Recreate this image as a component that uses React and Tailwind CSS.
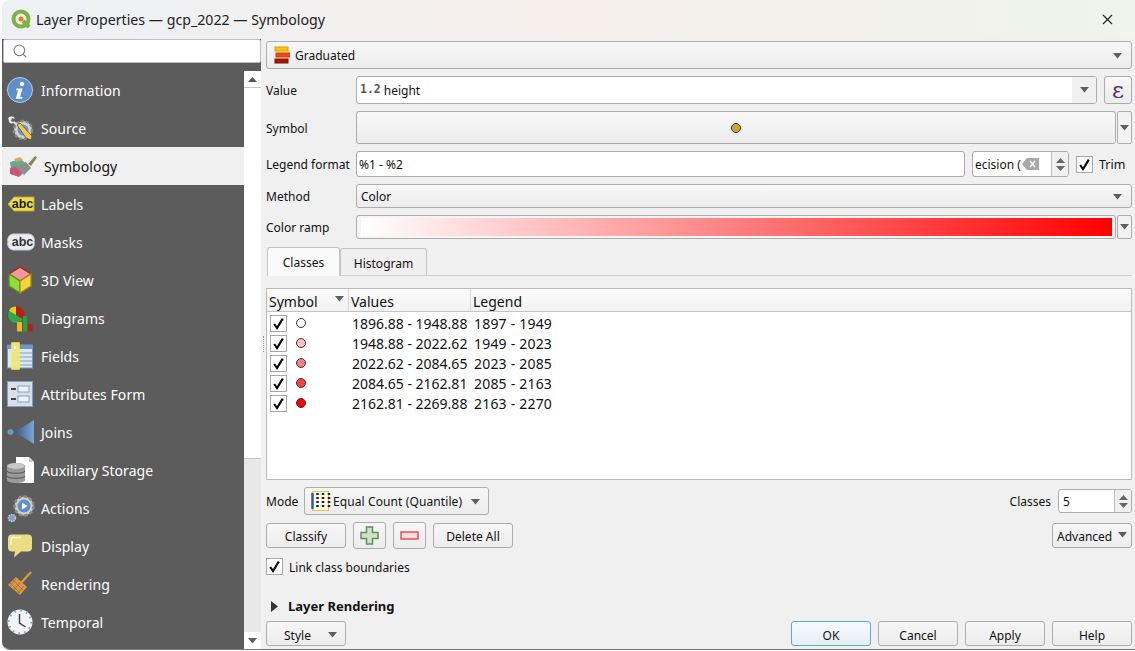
import React from 'react';
import { Search, X } from 'lucide-react';

const Caret = ({ className = '' }) => (
  <svg className={className} width="9" height="6" viewBox="0 0 9 6"><path d="M0 0h9L4.5 5.5z" fill="#5f5f5f" /></svg>
);

const Btn = ({ className = '', children }) => (
  <div className={`flex items-center justify-center h-[25px] pt-[2px] border border-[#adadad] rounded-[3px] bg-gradient-to-b from-[#f7f7f7] to-[#ececec] text-[12px] text-[#111] ${className}`}>
    {children}
  </div>
);

const Combo = ({ className = '', children }) => (
  <div className={`flex items-center justify-between pt-[2px] border border-[#adadad] rounded-[3px] bg-gradient-to-b from-[#f7f7f7] to-[#ececec] text-[12px] text-[#111] ${className}`}>
    {children}
  </div>
);

const Check = ({ className = '' }) => (
  <div className={`flex items-center justify-center w-[17px] h-[17px] border border-[#a8a8a8] bg-white shrink-0 ${className}`}>
    <svg width="13" height="13" viewBox="0 0 13 13"><path d="M2.2 7 L5 11 L10.8 1.6" fill="none" stroke="#000" strokeWidth="2.1" /></svg>
  </div>
);

const Spin = () => (
  <div className="flex flex-col items-center justify-center gap-[3px] w-[17px] h-full border-l border-[#bcbcbc] bg-[#f0f0f0]">
    <svg width="9" height="5" viewBox="0 0 9 5"><path d="M0 5h9L4.5 0z" fill="#666" /></svg>
    <svg width="9" height="5" viewBox="0 0 9 5"><path d="M0 0h9L4.5 5z" fill="#666" /></svg>
  </div>
);

const Row = ({ label, className = '', children }) => (
  <div className={`flex items-stretch ${className}`}>
    <div className="flex items-center w-[90px] shrink-0 pt-[2px] text-[12px] text-[#111]">{label}</div>
    {children}
  </div>
);

const AbcIcon = ({ bg, fg, stroke, line }) => (
  <svg width="28" height="18" viewBox="0 0 28 18">
    <path d={bg} fill={stroke} stroke={line} strokeWidth="1" />
    <text x="15.500" y="13" textAnchor="middle" fontSize="12.500" fontWeight="700" fontFamily="Liberation Sans" fill={fg}>abc</text>
  </svg>
);

const icons = {
  Information: (
    <svg width="26" height="26" viewBox="0 0 26 26">
      <circle cx="13" cy="13" r="12.500" fill="#5f8fc9" stroke="#b9cde6" strokeWidth="1" />
      <circle cx="15" cy="7" r="2.200" fill="#fff" />
      <path d="M9.500 11.500h6l-2.400 8.500h2.300l-.5 1.800H8.700l2.400-8.600h-2z" fill="#fff" />
    </svg>
  ),
  Source: (
    <svg width="27" height="27" viewBox="0 0 27 27">
      <circle cx="16" cy="15" r="9" fill="#d4d4d4" stroke="#8a8a8a" strokeDasharray="3 2" strokeWidth="2.500" />
      <circle cx="16" cy="15" r="5.500" fill="#6f97c8" />
      <path d="M1 3c2-3 7-2 7 1l-3-.5-1 2.500 3 1c-1 2-4 2-5 0z" fill="#eee" stroke="#777" strokeWidth=".5" />
      <path d="M7 6l4 3-1 2-4-3z" fill="#ddd" />
      <path d="M10 10l3-2 12 13-1 4-5-2z" fill="#eec85c" stroke="#6a5a20" strokeWidth=".9" />
    </svg>
  ),
  Symbology: (
    <svg width="29" height="22" viewBox="0 0 29 22">
      <path d="M1 7l11-3 4 4-14 5z" fill="#5fb08c" />
      <path d="M5 4l6-2 3 3-7 2z" fill="#e8a45a" />
      <path d="M1 13l5-2 9 6-5 5-9-3z" fill="#c9557a" />
      <path d="M6 11l11-4 5 6-7 7z" fill="#8d8f8a" />
      <path d="M19 9l7-8 2 1.500-6 8.500z" fill="#8a8455" />
    </svg>
  ),
  Labels: (
    <AbcIcon bg="M7 2h20v14H7L1 9z" fg="#222" stroke="#f0dc50" line="#b9a830" />
  ),
  Masks: (
    <AbcIcon bg="M6 1h16a6 6 0 0 1 5 8 6 6 0 0 1-5 8H6a6 6 0 0 1-5-8 6 6 0 0 1 5-8z" fg="#333" stroke="#e8ecf4" line="#c8cedb" />
  ),
  '3D View': (
    <svg width="26" height="28" viewBox="0 0 26 28">
      <path d="M13 1l11 7-11 7-11-7z" fill="#f29a9a" stroke="#b01818" strokeWidth="1.300" />
      <path d="M2 8l11 7v12L2 20z" fill="#8fdc3c" stroke="#5f8f14" strokeWidth="1.300" />
      <path d="M24 8l-11 7v12l11-7z" fill="#f2d63a" stroke="#a8871a" strokeWidth="1.300" />
    </svg>
  ),
  Diagrams: (
    <svg width="26" height="27" viewBox="0 0 26 27">
      <circle cx="9" cy="10" r="8.500" fill="#2ea84a" stroke="#444" strokeWidth=".6" />
      <path d="M9 10V1.500a8.500 8.500 0 0 1 7.300 12.800z" fill="#b81c1c" />
      <path d="M9 10L1.800 5.500A8.500 8.500 0 0 1 9 1.500z" fill="#f2c81e" />
      <rect x="10" y="17" width="5" height="9.500" fill="#f2b91e" />
      <rect x="16" y="11" width="4" height="15.500" fill="#2f9c3f" />
      <rect x="21" y="19" width="4.500" height="7.500" fill="#b81c1c" />
    </svg>
  ),
  Fields: (
    <svg width="26" height="28" viewBox="0 0 26 28">
      <rect x="0.500" y="3" width="25" height="23" fill="#dfe6ef" stroke="#6f97c8" />
      <rect x="0.500" y="3" width="25" height="4" fill="#6f97c8" />
      <path d="M12 11h13M12 15h13M12 19h13M12 23h13" stroke="#7aa0cf" />
      <rect x="5" y="1" width="7" height="26" fill="#e9e48e" stroke="#f6f04a" strokeWidth="1.500" />
      <rect x="7" y="4" width="2" height="3" fill="#fff" />
    </svg>
  ),
  'Attributes Form': (
    <svg width="26" height="26" viewBox="0 0 26 26">
      <rect x="0.500" y="0.500" width="25" height="25" fill="#d9dfe8" stroke="#7f9fc6" />
      <path d="M4 8h5M4 18h5" stroke="#444" strokeWidth="2" />
      <rect x="11" y="5" width="11" height="6" fill="#eef3fa" stroke="#7f9fc6" />
      <rect x="11" y="15" width="11" height="6" fill="#eef3fa" stroke="#7f9fc6" />
    </svg>
  ),
  Joins: (
    <svg width="28" height="28" viewBox="0 0 28 28">
      <defs><linearGradient id="jn" x1="0" x2="1"><stop offset="0" stopColor="#37598a" /><stop offset="1" stopColor="#7fa6d6" /></linearGradient></defs>
      <path d="M8 14L27 2v24z" fill="url(#jn)" />
      <circle cx="3.500" cy="14" r="3" fill="#6f97c8" />
    </svg>
  ),
  'Auxiliary Storage': (
    <svg width="28" height="27" viewBox="0 0 28 27">
      <path d="M9 0h13l5 5v21H9z" fill="#fff" />
      <path d="M22 0v5h5z" fill="#ccc" />
      <path d="M0 9c0-4 18-4 18 0v14c0 4-18 4-18 0z" fill="#9a9a9a" />
      <path d="M0 9c0 3 18 3 18 0M0 14c0 3 18 3 18 0M0 19c0 3 18 3 18 0" fill="none" stroke="#555" />
      <ellipse cx="9" cy="9" rx="9" ry="3" fill="#c8c8c8" />
    </svg>
  ),
  Actions: (
    <svg width="28" height="29" viewBox="0 0 28 29">
      <circle cx="17" cy="12" r="9.500" fill="#d0d0d0" stroke="#8a8a8a" strokeWidth="2.500" strokeDasharray="3.500 2" />
      <circle cx="17" cy="12" r="6.500" fill="#5f8fc9" />
      <path d="M15 8.500l5.500 3.500-5.500 3.500z" fill="#fff" />
      <circle cx="5" cy="24" r="3.500" fill="#7fa0cc" stroke="#ccc" strokeWidth="1.500" strokeDasharray="1.500 1" />
    </svg>
  ),
  Display: (
    <svg width="26" height="24" viewBox="0 0 26 24">
      <path d="M5 .5h16a4 4 0 0 1 4 4v9a4 4 0 0 1-4 4H14l-7 6 1-6H5a4 4 0 0 1-4-4v-9a4 4 0 0 1 4-4z" fill="#ecdc86" />
      <path d="M4 11V5.500a2 2 0 0 1 2-2h8" fill="none" stroke="#fbf6d8" strokeWidth="1.500" />
    </svg>
  ),
  Rendering: (
    <svg width="26" height="26" viewBox="0 0 26 26">
      <path d="M14 12L24 1" stroke="#d79a45" strokeWidth="2.200" />
      <path d="M9 6l11 10-7 8L1 14z" fill="#d8974a" />
      <path d="M6 9l10 10M3 12l10 10M9 8l-6 7M13 11l-6 8M17 15l-6 7" stroke="#a86a25" strokeWidth=".8" />
    </svg>
  ),
  Temporal: (
    <svg width="26" height="26" viewBox="0 0 26 26">
      <circle cx="13" cy="13" r="12.500" fill="#f1f3f6" />
      <circle cx="13" cy="13" r="11.200" fill="none" stroke="#7fa0cc" strokeWidth="2" strokeDasharray="1.500 4.360" />
      <path d="M12.500 5v9l6 4" fill="none" stroke="#444" strokeWidth="1.500" />
    </svg>
  ),
};

const navItems = ['Information', 'Source', 'Symbology', 'Labels', 'Masks', '3D View', 'Diagrams', 'Fields', 'Attributes Form', 'Joins', 'Auxiliary Storage', 'Actions', 'Display', 'Rendering', 'Temporal'];

const classes = [
  { color: '#ffffff', values: '1896.88 - 1948.88', legend: '1897 - 1949' },
  { color: '#ffbfbf', values: '1948.88 - 2022.62', legend: '1949 - 2023' },
  { color: '#ff8080', values: '2022.62 - 2084.65', legend: '2023 - 2085' },
  { color: '#ff4040', values: '2084.65 - 2162.81', legend: '2085 - 2163' },
  { color: '#ff0000', values: '2162.81 - 2269.88', legend: '2163 - 2270' },
];

const NavItem = ({ name }) => {
  const active = name === 'Symbology';
  return (
    <div className={`flex items-center h-[38px] shrink-0 ${active ? 'bg-[#f0f0f0] text-[#111]' : 'text-white'}`}>
      <div className={`flex items-center shrink-0 ${active ? 'w-[42px] pl-[7px]' : 'w-[39px] pl-[5px]'}`}>{icons[name]}</div>
      <span className="pt-[1px] text-[14px] tracking-[0.05px]">{name}</span>
    </div>
  );
};

export default function App() {
  return (
    <div className="h-[651px] w-[1135px] overflow-hidden bg-white pl-[2px] font-['Noto_Sans',sans-serif]">
      <div className="flex flex-col h-[650px] bg-[#f0f0f0] rounded-tl-[8px] rounded-bl-[8px] border-b border-[#777] overflow-hidden">
        {/* Title bar */}
        <div className="flex items-center justify-between h-[39px] shrink-0 pl-[9px] pr-[19px] bg-gradient-to-r from-[#edf1f4] via-[#f6efec] to-[#eff4ec]">
          <div className="flex items-center gap-[5px]">
            <svg width="20" height="20" viewBox="0 0 20 20">
              <circle cx="10" cy="10" r="7.500" fill="none" stroke="#7cb342" strokeWidth="4" />
              <path d="M12 12l6 6" stroke="#7cb342" strokeWidth="4" />
              <circle cx="10" cy="10" r="2.500" fill="#ee7913" />
            </svg>
            <span className="text-[14.2px] text-[#222]">Layer Properties — gcp_2022 — Symbology</span>
          </div>
          <X size={17} strokeWidth={1.6} className="text-[#222]" />
        </div>

        <div className="flex flex-1 min-h-0">
          {/* Sidebar */}
          <div className="flex flex-col w-[259px] shrink-0 bg-[#5c5c5c]">
            <div className="flex items-center h-[24px] shrink-0 ml-[1px] bg-white border border-[#bdbdbd] rounded-[2px] pl-[8px]">
              <Search size={16} strokeWidth={1.6} className="text-[#777]" />
            </div>
            <div className="h-[8px] shrink-0" />
            <div className="flex flex-1 min-h-0">
              <div className="flex flex-col flex-1">
                {navItems.map((name) => (
                  <NavItem key={name} name={name} />
                ))}
              </div>
              <div className="flex flex-col w-[17px] shrink-0 bg-white">
                <div className="flex items-center justify-center h-[17px] border-b border-[#c8c8c8]">
                  <svg width="9" height="5" viewBox="0 0 9 5"><path d="M0 5h9L4.5 0z" fill="#555" /></svg>
                </div>
                <div className="h-[371px] border-b border-[#c8c8c8]" />
                <div className="flex-1 bg-[#e8e8e8]" />
                <div className="flex items-center justify-center h-[17px]"><Caret /></div>
              </div>
            </div>
          </div>

          {/* Splitter handle */}
          <div className="flex items-center justify-center w-[5px] shrink-0">
            <div className="h-[16px] border-l border-dotted border-[#a0a0a0]" />
          </div>

          {/* Main panel */}
          <div className="flex flex-col flex-1 min-w-0 pr-[3px] pt-[2px]">
            <Combo className="h-[28px] pl-[7px] pr-[9px]">
              <div className="flex items-center gap-[5px]">
                <svg width="16" height="18" viewBox="0 0 16 18" className="-mt-[2px]">
                  <rect x="1" y="1" width="13" height="4" fill="#ffc000" stroke="#d8a000" />
                  <rect x="2" y="7" width="14" height="4" fill="#f04a10" stroke="#d03a08" />
                  <rect x="1" y="13" width="13" height="4" fill="#a81800" stroke="#801000" />
                </svg>
                <span>Graduated</span>
              </div>
              <Caret />
            </Combo>

            <Row label="Value" className="h-[28px] mt-[7px]">
              <div className="flex items-center flex-1 border border-[#adadad] rounded-[3px] bg-white overflow-hidden">
                <span className="pl-[3px] pr-[3px] text-[11.5px] font-bold text-[#555] font-['DejaVu_Sans_Mono',monospace]">1.2</span>
                <span className="flex-1 pt-[2px] text-[12px] text-[#111]">height</span>
                <div className="flex items-center justify-center w-[24px] h-full bg-[#f0f0f0]"><Caret /></div>
              </div>
              <Btn className="w-[28px] !h-[28px] !pt-0 ml-[7px]">
                <span className="text-[23px] leading-none text-[#5a2a6a] font-['DejaVu_Serif',serif]">ε</span>
              </Btn>
            </Row>

            <Row label="Symbol" className="h-[33px] mt-[7px]">
              <div className="flex items-center justify-center flex-1 border border-[#adadad] rounded-[3px] bg-gradient-to-b from-[#f7f7f7] to-[#ececec]">
                <div className="w-[10px] h-[10px] rounded-full bg-[#d3a52c] border border-[#3a3a3a]" />
              </div>
              <div className="flex items-center justify-center w-[15px] ml-[1px] border border-[#adadad] rounded-[2px] bg-[#f2f2f2]"><Caret /></div>
            </Row>

            <Row label="Legend format" className="h-[26px] mt-[7px]">
              <div className="flex items-center flex-1 pl-[2px] pt-[2px] border border-[#adadad] rounded-[3px] bg-white text-[12px] text-[#111]">%1 - %2</div>
              <div className="flex items-center w-[97px] ml-[7px] border border-[#adadad] rounded-[3px] bg-white overflow-hidden">
                <span className="pl-[2px] pt-[2px] text-[12px] leading-[16px] text-[#111] whitespace-nowrap">ecision (</span>
                <svg width="17" height="12" viewBox="0 0 17 12" className="ml-auto mr-[12px]">
                  <path d="M5 0h12v12H5L0 6z" fill="#a8a8a8" />
                  <path d="M8 3l5 6M13 3l-5 6" stroke="#fff" strokeWidth="1.300" />
                </svg>
                <Spin />
              </div>
              <Check className="ml-[7px] mt-[5px]" />
              <span className="flex items-center ml-[6px] w-[33px] pt-[2px] text-[12.500px] text-[#111]">Trim</span>
            </Row>

            <Row label="Method" className="h-[24px] mt-[7px]">
              <Combo className="flex-1 pl-[4px] pr-[9px]">
                <span>Color</span>
                <Caret />
              </Combo>
            </Row>

            <Row label="Color ramp" className="h-[24px] mt-[7px]">
              <div className="flex-1 p-[2px] pl-[4px] pr-[3px] border border-[#adadad] rounded-[3px] bg-[#f5f5f5]">
                <div className="h-full bg-linear-to-r/srgb from-white to-[#ff0000]" />
              </div>
              <div className="flex items-center justify-center w-[15px] ml-[1px] border border-[#adadad] rounded-[2px] bg-[#f2f2f2]"><Caret /></div>
            </Row>

            {/* Tabs */}
            <div className="flex items-end h-[29px] mt-[8px] ml-[1px] border-b border-[#d0d0d0]">
              <div className="flex items-center justify-center w-[73px] h-[29px] pt-[2px] -mb-px bg-[#fafafa] border border-b-0 border-[#c4c4c4] rounded-t-[3px] text-[12px] text-[#111]">Classes</div>
              <div className="flex items-center justify-center w-[87px] h-[27px] pt-[4px] bg-[#efefef] border border-b-0 border-[#c4c4c4] rounded-t-[3px] text-[12px] text-[#111]">Histogram</div>
            </div>

            {/* Classes table */}
            <div className="flex flex-col h-[192px] mt-[12px] border border-[#bcbcbc] bg-white">
              <div className="flex h-[23px] shrink-0 border-b border-[#c4c4c4] bg-gradient-to-b from-[#fbfbfb] to-[#f2f2f2] text-[14px] text-[#111]">
                <div className="flex items-center justify-between w-[82px] pl-[2px] pr-[4px] pt-[2px] border-r border-[#d8d8d8]">
                  <span>Symbol</span>
                  <Caret className="mb-[4px]" />
                </div>
                <div className="flex items-center w-[122px] pl-[2px] pt-[2px] border-r border-[#d8d8d8]">Values</div>
                <div className="flex items-center flex-1 pl-[2px] pt-[2px]">Legend</div>
              </div>
              <div className="flex flex-col pt-[1px]">
                {classes.map((c) => (
                  <div key={c.values} className="flex items-center h-[20px] text-[14px] text-[#111]">
                    <Check className="ml-[3px]" />
                    <div className="w-[10px] h-[10px] ml-[9px] rounded-full border border-[#333]" style={{ backgroundColor: c.color }} />
                    <span className="w-[122px] ml-[46px] whitespace-nowrap">{c.values}</span>
                    <span className="whitespace-nowrap tracking-[0.2px]">{c.legend}</span>
                  </div>
                ))}
              </div>
            </div>

            {/* Mode + classes */}
            <div className="flex items-center justify-between h-[28px] mt-[7px]">
              <div className="flex items-center">
                <span className="w-[38px] pt-[2px] text-[12px] text-[#111]">Mode</span>
                <Combo className="w-[185px] h-[28px] pl-[6px] pr-[8px]">
                  <div className="flex items-center gap-[2px]">
                    <svg width="20" height="20" viewBox="0 0 20 20" className="-mt-[2px]">
                      <rect x="1.500" y="0.500" width="16" height="19" fill="#f5f5e8" stroke="#e2c83a" />
                      <path d="M1.500 2v16" stroke="#2f5d9a" strokeWidth="2.500" />
                      <path d="M6.500 2v16M12 2v16M18 2v16" stroke="#222" strokeWidth="2.500" strokeDasharray="2 2" />
                    </svg>
                    <span className="tracking-[0.1px]">Equal Count (Quantile)</span>
                  </div>
                  <Caret />
                </Combo>
              </div>
              <div className="flex items-center">
                <span className="mr-[7px] pt-[2px] text-[12px] text-[#111]">Classes</span>
                <div className="flex items-center justify-between w-[74px] h-[24px] pl-[4px] border border-[#adadad] rounded-[3px] bg-white text-[12px] text-[#111] overflow-hidden">
                  <span className="pt-[2px]">5</span>
                  <Spin />
                </div>
              </div>
            </div>

            {/* Class buttons */}
            <div className="flex items-center justify-between h-[25px] mt-[8px]">
              <div className="flex items-center gap-[7px]">
                <Btn className="w-[80px]">Classify</Btn>
                <Btn className="w-[33px] !h-[27px] !pt-0">
                  <svg width="19" height="19" viewBox="0 0 19 19"><path d="M6.500 1h6v5.500H18v6h-5.500V18h-6v-5.500H1v-6h5.500z" fill="#cfe3c8" stroke="#5f8f5a" strokeWidth="1.500" /></svg>
                </Btn>
                <Btn className="w-[33px] !h-[27px] !pt-0">
                  <svg width="19" height="9" viewBox="0 0 19 9"><rect x="1" y="1" width="17" height="7" fill="#fbdcdc" stroke="#ea5a62" strokeWidth="1.600" /></svg>
                </Btn>
                <Btn className="w-[80px]">Delete All</Btn>
              </div>
              <Combo className="w-[80px] h-[25px] pl-[4px] pr-[4px]">
                <span>Advanced</span>
                <Caret className="mb-[3px]" />
              </Combo>
            </div>

            <div className="flex items-center gap-[6px] h-[17px] mt-[10px]">
              <Check />
              <span className="pt-[2px] text-[12px] text-[#111]">Link class boundaries</span>
            </div>

            <div className="flex items-center h-[20px] mt-[21px] pl-[5px]">
              <svg width="7" height="11" viewBox="0 0 7 11"><path d="M0 0l7 5.500-7 5.500z" fill="#333" /></svg>
              <span className="ml-[10px] pt-[2px] text-[13px] font-bold text-[#111]">Layer Rendering</span>
            </div>

            {/* Dialog buttons */}
            <div className="flex items-center justify-between mt-[5px]">
              <Combo className="w-[80px] h-[25px] !pt-[4px] pl-[17px] pr-[8px]">
                <span>Style</span>
                <Caret className="-mt-[2px]" />
              </Combo>
              <div className="flex items-center gap-[7px]">
                <Btn className="w-[80px] !pt-[4px] !border-[#5aa9e6] !from-[#f4f9fd] !to-[#e8eff5]">OK</Btn>
                <Btn className="w-[80px] !pt-[4px]">Cancel</Btn>
                <Btn className="w-[80px] !pt-[4px]">Apply</Btn>
                <Btn className="w-[80px] !pt-[4px]">Help</Btn>
              </div>
            </div>
          </div>
        </div>
      </div>
    </div>
  );
}
